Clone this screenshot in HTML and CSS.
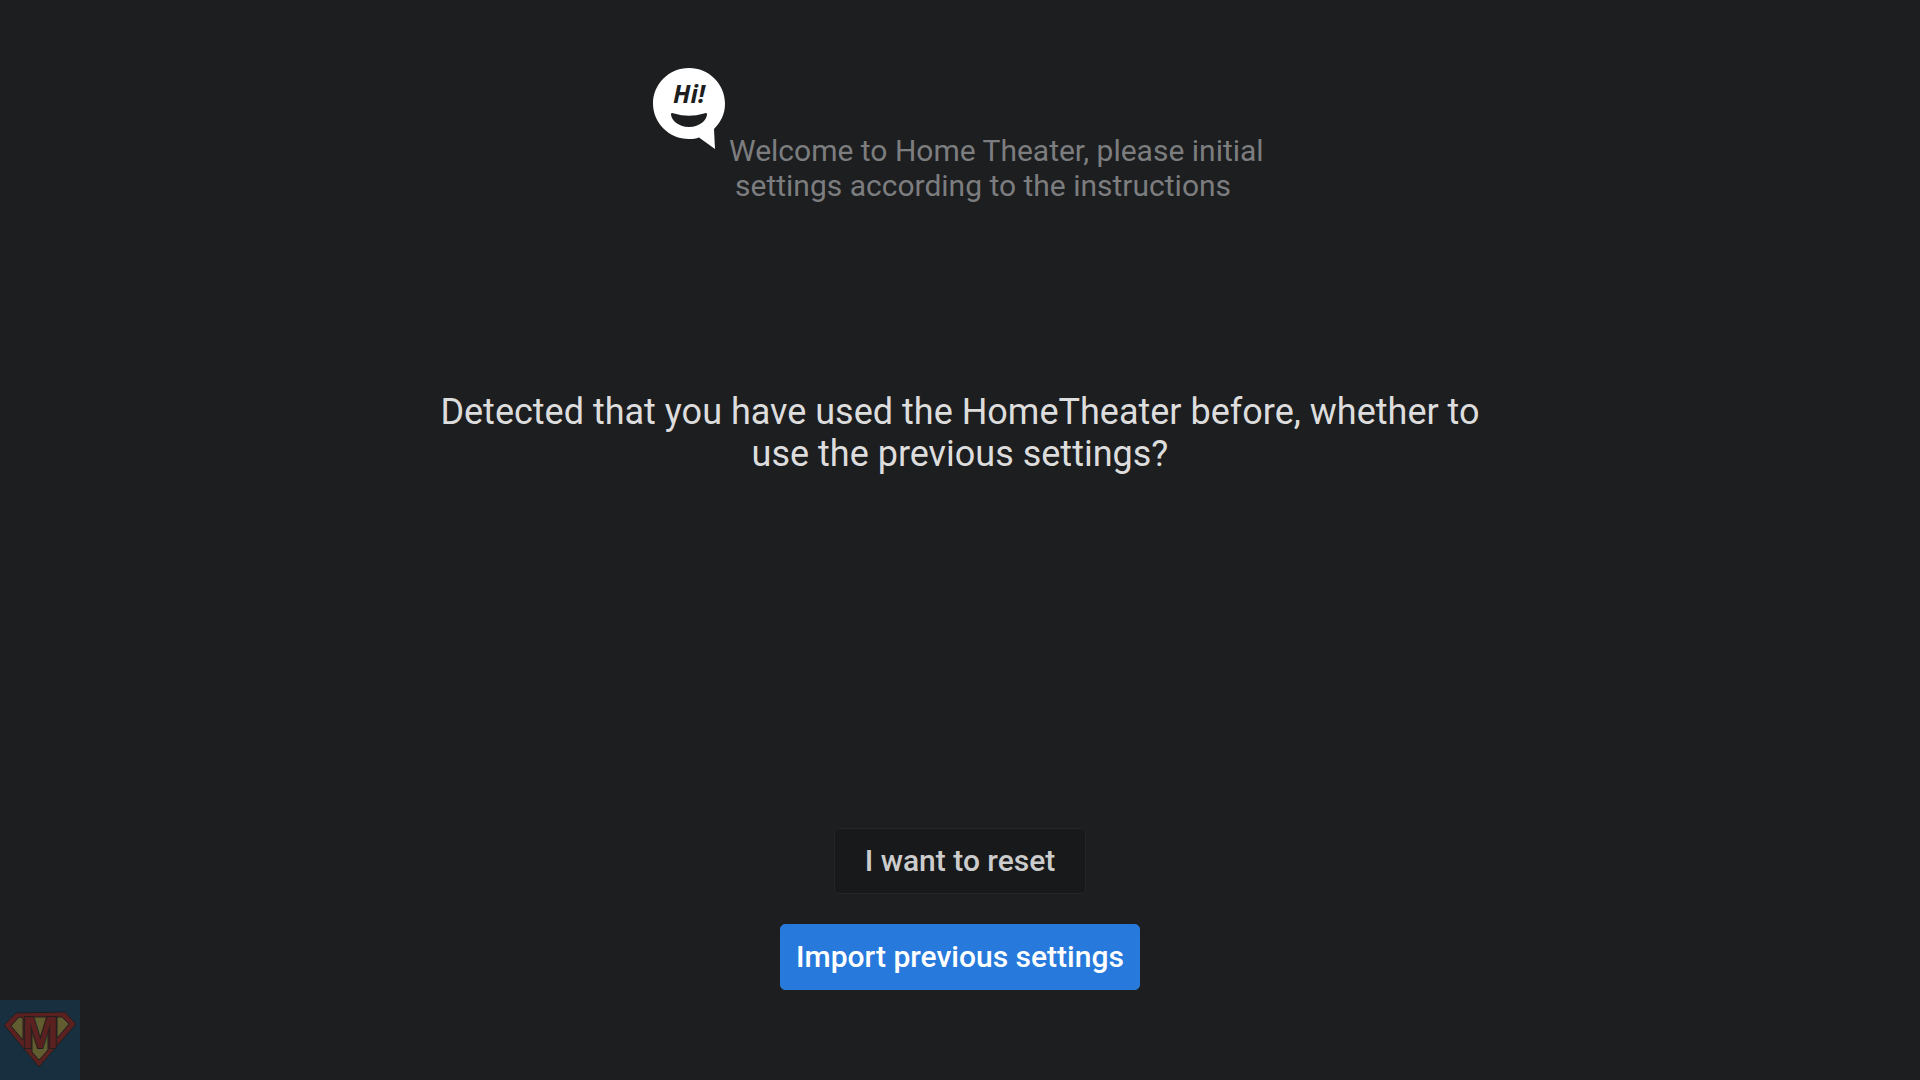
FILE: index.html
```html
<!DOCTYPE html>
<html lang="en">
<head>
    <meta charset="UTF-8">
    <meta name="viewport" content="width=device-width, initial-scale=1.0">
    <title>Home Theater Setup</title>
    <link rel="stylesheet" href="styles.css">
</head>
<body>
    <header class="welcome">
        <svg class="welcome-icon" viewBox="0 0 72 81" aria-hidden="true">
            <path fill="#fff" d="M36 0C16 0 0 16 0 35.500C0 55 16 71 36 71C40 71 43 70.500 46 69.500L62 81L61 61C68 54 72 46 72 35.500C72 16 56 0 36 0Z"/>
            <path fill="#1d1e20" d="M18 46Q18 44.500 21 45.500Q36 50 51 45.500Q54 44.500 54 46Q54 50 50 54Q44 59 36 59Q28 59 22 54Q18 50 18 46Z"/>
            <text class="hi" x="36" y="35" text-anchor="middle">Hi!</text>
        </svg>
        <p class="welcome-text">Welcome to Home Theater, please initial<br>settings according to the instructions</p>
    </header>

    <main class="setup">
        <h1 class="question">Detected that you have used the HomeTheater before, whether to use the previous settings?</h1>
        <div class="actions">
            <button class="btn" type="button">I want to reset</button>
            <button class="btn btn-primary" type="button">Import previous settings</button>
        </div>
    </main>

    <svg class="badge" viewBox="0 0 80 80" aria-hidden="true">
        <rect width="80" height="80" fill="#172f3f"/>
        <path fill="#5a2120" stroke="#1b2022" d="M16 13L65 12L76 24L39 67L4 25Z"/>
        <path fill="#625d31" stroke="#211f1d" d="M19 17L23 18V40L11 26ZM57 17L62 17L69 24L57 38Z"/>
        <path fill="#625d31" stroke="#211f1d" d="M32 17H48V50L39 60L32 52Z"/>
        <text class="badge-letter" x="40" y="48" text-anchor="middle">M</text>
    </svg>
</body>
</html>
```

FILE: styles.css
```css
* {
    box-sizing: border-box;
}
body {
    margin: 0;
    min-height: 100vh;
    display: flex;
    flex-direction: column;
    background-color: #1d1e20;
    color: #dddddd;
    font-family: Roboto, sans-serif;
}
.welcome {
    display: flex;
    justify-content: center;
    gap: 4px;
    padding-top: 68px;
}
.welcome-icon {
    width: 72px;
    height: 81px;
}
.hi {
    font: italic bold 25px "Open Sans", sans-serif;
    fill: #1d1e20;
}
.welcome-text {
    margin: 0;
    width: 538px;
    padding: 65px 0 0 6px;
    text-indent: -6px;
    font-size: 30px;
    line-height: 35px;
    color: #7c7d7f;
}
.setup {
    flex: 1;
    display: flex;
    flex-direction: column;
    justify-content: space-between;
    align-items: center;
    padding: 188px 20px 90px;
}
.question {
    margin: 0;
    max-width: 1080px;
    font-size: 36px;
    font-weight: 400;
    line-height: 42px;
    text-align: center;
}
.actions {
    display: flex;
    flex-direction: column;
    align-items: center;
    gap: 30px;
}
.btn {
    padding: 14px 30px;
    border: 1px solid #242527;
    border-radius: 5px;
    background-color: #18191b;
    color: #cccccc;
    font-family: inherit;
    font-size: 30px;
    font-weight: 500;
    line-height: 36px;
    cursor: pointer;
}
.btn-primary {
    padding: 14px 15px;
    border-color: #277adb;
    background-color: #277adb;
    color: #fff;
}
.badge {
    position: fixed;
    left: 0;
    bottom: 0;
    width: 80px;
    height: 80px;
}
.badge-letter {
    font: bold 44px "Liberation Sans", sans-serif;
    fill: #5a2120;
    stroke: #211f1d;
    stroke-width: 2;
    paint-order: stroke;
}
```
